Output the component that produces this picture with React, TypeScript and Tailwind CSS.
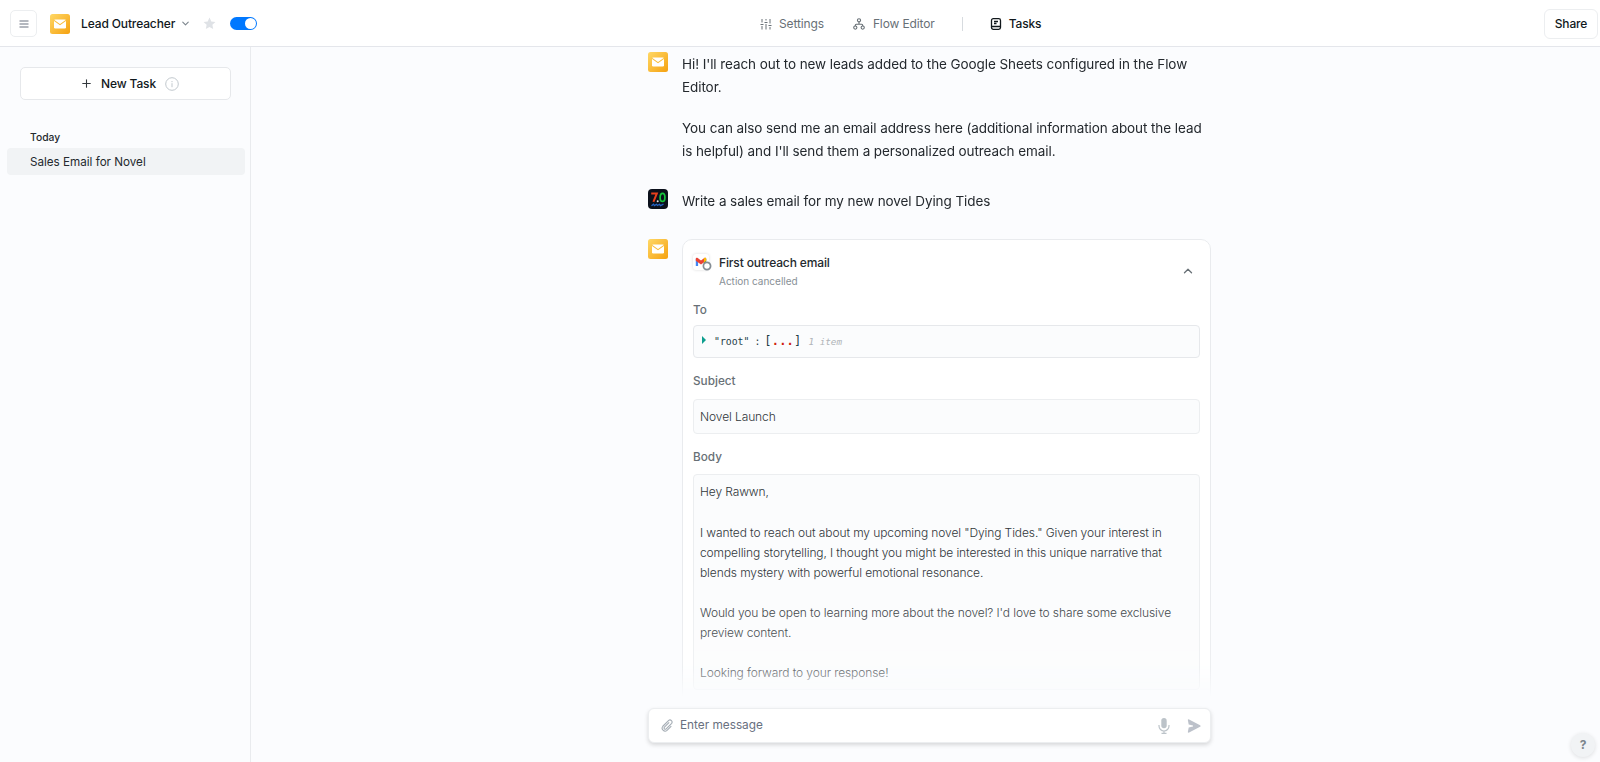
import type { ReactNode } from "react";
import { ChevronDown, ChevronUp, Plus } from "lucide-react";

const emailBody = [
  ["Hey Rawwn,"],
  [
    "I wanted to reach out about my upcoming novel \"Dying Tides.\" Given your interest in",
    "compelling storytelling, I thought you might be interested in this unique narrative that",
    "blends mystery with powerful emotional resonance.",
  ],
  [
    "Would you be open to learning more about the novel? I'd love to share some exclusive",
    "preview content.",
  ],
  ["Looking forward to your response!"],
];

function MailLogo() {
  return (
    <svg viewBox="0 0 20 20" className="size-5 shrink-0">
      <defs>
        <linearGradient id="mail-bg" x1="0" y1="0" x2="1" y2="1">
          <stop offset="0" stopColor="#ffd866" />
          <stop offset="1" stopColor="#f5a110" />
        </linearGradient>
      </defs>
      <rect width="20" height="20" rx="2.5" fill="url(#mail-bg)" />
      <rect x="4" y="5.5" width="12" height="9" rx="1.3" fill="#fff" />
      <path d="M4 6.4l6 4.2 6-4.2" fill="none" stroke="#f9bd3c" strokeWidth="1.1" />
    </svg>
  );
}

function UserAvatar() {
  return (
    <svg viewBox="0 0 20 20" className="size-5 shrink-0">
      <rect width="20" height="20" rx="4" fill="#0b101b" />
      <path d="M3.2 4.6h5.600L5.400 12.800" fill="none" stroke="#e8401c" strokeWidth="2" />
      <circle cx="9.700" cy="12.300" r="1" fill="#e5e7eb" />
      <ellipse cx="14.500" cy="8.400" rx="2.400" ry="4" fill="none" stroke="#16c43c" strokeWidth="1.700" />
      <path d="M3.500 16.800l2-1.600 1 1.400 2-1.300 1 1.200 2-1.200 1 1.300 3-1.400" fill="none" stroke="#2463c4" strokeWidth="1.300" />
    </svg>
  );
}

function GmailIcon() {
  return (
    <div className="relative mt-px size-4 rounded-[3px] bg-white shadow-[0_0_3px_rgba(0,0,0,0.15)]">
      <svg viewBox="0 0 16 16" className="size-4">
        <path d="M2.8 12V4.6l2.3 1.8V12z" fill="#4285f4" />
        <path d="M10.9 12V6.4l2.3-1.8V12z" fill="#34a853" />
        <path d="M2.8 6.8V4.9c0-1 1.1-1.4 1.9-.8L8 6.6l3.3-2.5c.8-.6 1.9-.2 1.9.8v1.9L8 10.4z" fill="#ea4335" />
        <path d="M10.9 4.4l.4-.3c.8-.6 1.9-.2 1.9.8v1.9l-2.3 1.6z" fill="#fbbc04" />
      </svg>
      <svg viewBox="0 0 10 10" className="absolute left-[9px] top-[6.5px] size-2.5">
        <circle cx="5" cy="5" r="3.600" fill="#fff" stroke="#858d94" strokeWidth="1.700" />
      </svg>
    </div>
  );
}

function Message({ avatar, children }: { avatar: ReactNode; children: ReactNode }) {
  return (
    <div className="flex gap-3.5">
      {avatar}
      <div className="min-w-0 flex-1 text-[13.5px] leading-[23.3px] tracking-[-0.08px] text-[#24292e]">{children}</div>
    </div>
  );
}

function Header() {
  return (
    <header className="flex h-[47px] shrink-0 items-center border-b border-[#e4e6eb] bg-white pl-2.5 pr-0.5 pt-px text-[12px] tracking-[-0.13px]">
      <div className="flex w-[750px] shrink-0 items-center">
        <button className="flex size-[27px] items-center justify-center rounded-[5px] border border-[#eceef0]">
          <svg viewBox="0 0 10 10" className="size-2.5" stroke="#6b7280" strokeWidth="1.2">
            <path d="M.5 2h9M.5 5h9M.5 8h9" />
          </svg>
        </button>
        <div className="ml-[13px]">
          <MailLogo />
        </div>
        <span className="ml-[11px] font-medium text-[#11181c]">Lead Outreacher</span>
        <ChevronDown className="ml-[5px] size-[11px] text-[#7c858d]" strokeWidth={2.4} />
        <svg viewBox="0 0 24 24" className="ml-3 size-[13px]" fill="#dfe2e6">
          <path d="M12 1l3.300 7.200 7.700.9-5.700 5.300 1.500 7.800L12 18.300 5.200 22.200l1.500-7.800L1 9.100l7.700-.9z" />
        </svg>
        <div className="ml-3.5 flex h-[13px] w-[27px] items-center justify-end rounded-full bg-[#0078ff] pr-px">
          <div className="size-[11px] rounded-full bg-white" />
        </div>
      </div>
      <nav className="flex items-center text-[#687076]">
        <svg viewBox="0 0 12 12" className="size-3" fill="none" stroke="currentColor" strokeWidth="1">
          <path d="M2 1v3.500M2 8v3.500M.5 6.500h3M6 1v1.500M6 6v5.500M4.500 4.500h3M10 1v4.500M10 9v2.500M8.500 7.500h3" />
        </svg>
        <span className="ml-[7px]">Settings</span>
        <svg viewBox="0 0 12 12" className="ml-[29px] size-3" fill="none" stroke="currentColor" strokeWidth="1.1">
          <circle cx="6" cy="2.300" r="1.600" />
          <circle cx="2.300" cy="9.600" r="1.600" />
          <circle cx="9.700" cy="9.600" r="1.600" />
          <path d="M6 4v2.200M2.300 8V7.200q0-1 1-1h5.400q1 0 1 1V8" />
        </svg>
        <span className="ml-2">Flow Editor</span>
        <div className="ml-[27px] h-3.5 w-px bg-[#d7dbdf]" />
        <svg viewBox="0 0 12 12" className="ml-[27px] size-3 text-[#11181c]" fill="none" stroke="currentColor" strokeWidth="1.300">
          <rect x="1.500" y=".7" width="9" height="10.600" rx="1.800" />
          <path d="M1.800 8.500h8.400M4 3.500h4M4 5.500h2.500" />
        </svg>
        <span className="ml-[7px] font-medium text-[#11181c]">Tasks</span>
      </nav>
      <div className="flex flex-1 justify-end">
        <button className="h-[30px] w-[54px] rounded-md border border-[#eceef0] font-medium text-[#11181c]">Share</button>
      </div>
    </header>
  );
}

function Sidebar() {
  return (
    <aside className="w-[251px] shrink-0 border-r border-[#e9ebee] pl-[7px] pr-[5px] pt-5 text-[#11181c]">
      <button className="mx-[13px] flex h-[33px] w-[211px] items-center justify-center rounded-[5px] border border-[#e6e8eb] bg-white pl-2 text-[12px] font-medium tracking-[-0.13px]">
        <Plus className="size-[13px] text-[#33393e]" strokeWidth={2} />
        <span className="ml-2">New Task</span>
        <svg viewBox="0 0 14 14" className="ml-[9px] size-3.5" fill="none" stroke="#c1c8cd" strokeWidth="1">
          <circle cx="7" cy="7" r="6.300" />
          <path d="M7 6.200v4M7 4v1.200" />
        </svg>
      </button>
      <div className="mt-[29px] pl-[23px] text-[10.3px] font-medium leading-4 text-[#24292e]">Today</div>
      <div className="mt-[3px] flex h-[27px] items-center rounded-[4px] bg-[#f1f3f5] pl-[23px] pt-[3px] text-[11.65px] text-[#24292e]">
        Sales Email for Novel
      </div>
    </aside>
  );
}

function EmailCard() {
  return (
    <div className="h-[600px] rounded-[10px] border border-[#e9ebee] bg-white px-2.5 pt-[13px] tracking-normal">
      <div className="flex items-start">
        <GmailIcon />
        <div className="ml-2.5 flex-1">
          <div className="text-[12px] font-medium leading-5 tracking-[-0.13px] text-[#24292e]">First outreach email</div>
          <div className="text-[10px] leading-4 text-[#889096]">Action cancelled</div>
        </div>
        <ChevronUp className="mr-[5px] mt-[11px] size-3.5 text-[#687076]" strokeWidth={2.2} />
      </div>
      <div className="mt-[13px] text-[11.75px] font-medium leading-4 text-[#687076]">To</div>
      <div className="mt-[6.5px] flex h-[33px] items-center rounded-[4px] border border-[#e6e8eb] bg-[#fbfcfd] pl-2 font-['DejaVu_Sans_Mono',monospace] text-[9.8px] text-[#1f4048]">
        <svg viewBox="0 0 4 8" className="mb-0.5 h-2 w-1" fill="#0d9e8e">
          <path d="M0 0l4 4-4 4z" />
        </svg>
        <span className="ml-2">"root"</span>
        <span className="ml-[5px]">:</span>
        <span className="ml-1 text-[12px] tracking-[0.2px]">[<span className="font-bold text-[#d0210f]">...</span>]</span>
        <span className="ml-[7px] text-[9.3px] italic text-[#b0b4b8]">1 item</span>
      </div>
      <div className="mt-[15px] text-[11.75px] font-medium leading-4 text-[#687076]">Subject</div>
      <div className="mt-2.5 flex h-[35px] items-center rounded-[4px] border border-[#eceef0] bg-[#fbfcfd] pl-[6px] text-[12px] font-light tracking-[-0.1px] text-[#30363a]">
        Novel Launch
      </div>
      <div className="mt-[15.5px] text-[11.75px] font-medium leading-4 text-[#687076]">Body</div>
      <div className="mt-[9px] h-[216px] rounded-[4px] border border-[#eceef0] bg-[#fbfcfd] pl-[6px] pt-[7px] text-[12px] font-light leading-[20.1px] tracking-[-0.1px] text-[#30363a]">
        {emailBody.map((lines) => (
          <p key={lines[0]} className="mb-[20.1px] whitespace-nowrap">
            {lines.map((line) => (
              <span key={line} className="block">{line}</span>
            ))}
          </p>
        ))}
      </div>
    </div>
  );
}

function Composer() {
  return (
    <div className="flex h-[35px] items-center rounded-md border border-[#eceef0] bg-white pl-3 pr-[9px] text-[11.8px] text-[#687080] shadow-[0_2px_4px_rgba(0,0,0,0.15)]">
      <svg viewBox="0 0 14 14" className="size-[13px]" fill="none" stroke="#a5adb5" strokeWidth="1.200">
        <path d="M8.800 3.600L3.700 8.700a1.300 1.300 0 0 0 1.900 1.900l5.900-5.900a2.300 2.300 0 0 0-3.200-3.200L2 7.800a3.200 3.200 0 0 0 4.500 4.500l4.600-4.600" />
      </svg>
      <span className="ml-1.5 flex-1 pt-px">Enter message</span>
      <svg viewBox="0 0 12 16" className="h-4 w-3" fill="#bcc3c9">
        <rect x="3.300" y="0" width="5.400" height="10.300" rx="2.700" />
        <path d="M1 7v1a5 5 0 0 0 10 0V7M6 13v2.300M3.500 15.300h5" fill="none" stroke="#bcc3c9" strokeWidth="1.200" />
      </svg>
      <svg viewBox="0 0 14 14" className="ml-[17px] size-3.5" fill="#bcc1ca">
        <path d="M.8.7q.4-.6 1.300-.2l11 5.700q1 .8 0 1.600l-11 5.700q-.9.400-1.300-.3L1.700 8.400l4.300-.8V6.400l-4.300-.8z" />
      </svg>
    </div>
  );
}

export default function App() {
  return (
    <div className="relative flex h-screen flex-col overflow-hidden bg-[#fbfcfe] font-[Inter,sans-serif]">
      <Header />
      <div className="flex min-h-0 flex-1">
        <Sidebar />
        <main className="flex min-w-0 flex-1 flex-col pl-[397px]">
          <div className="w-[563px] min-h-0 flex-1 overflow-hidden pt-[5px] [mask-image:linear-gradient(to_bottom,black_80%,rgba(0,0,0,0.8)_95%,transparent_99.500%)]">
            <Message avatar={<MailLogo />}>
              <p className="pt-px">
                <span className="block whitespace-nowrap">Hi! I'll reach out to new leads added to the Google Sheets configured in the Flow</span>
                <span className="block">Editor.</span>
              </p>
              <p className="mt-[17px]">
                <span className="block whitespace-nowrap">You can also send me an email address here (additional information about the lead</span>
                <span className="block whitespace-nowrap">is helpful) and I'll send them a personalized outreach email.</span>
              </p>
            </Message>
            <div className="h-[26px]" />
            <Message avatar={<UserAvatar />}>
              <p className="pt-px">Write a sales email for my new novel Dying Tides</p>
            </Message>
            <div className="h-[26px]" />
            <Message avatar={<MailLogo />}>
              <EmailCard />
            </Message>
          </div>
          <div className="mb-[19px] mt-2 w-[563px]">
            <Composer />
          </div>
        </main>
      </div>
      <button className="absolute bottom-[5px] right-[5px] size-6 rounded-full bg-[#f1f3f5] text-[12px] font-bold text-[#7c858d] shadow-[0_1px_4px_rgba(0,0,0,0.12)]">
        ?
      </button>
    </div>
  );
}
